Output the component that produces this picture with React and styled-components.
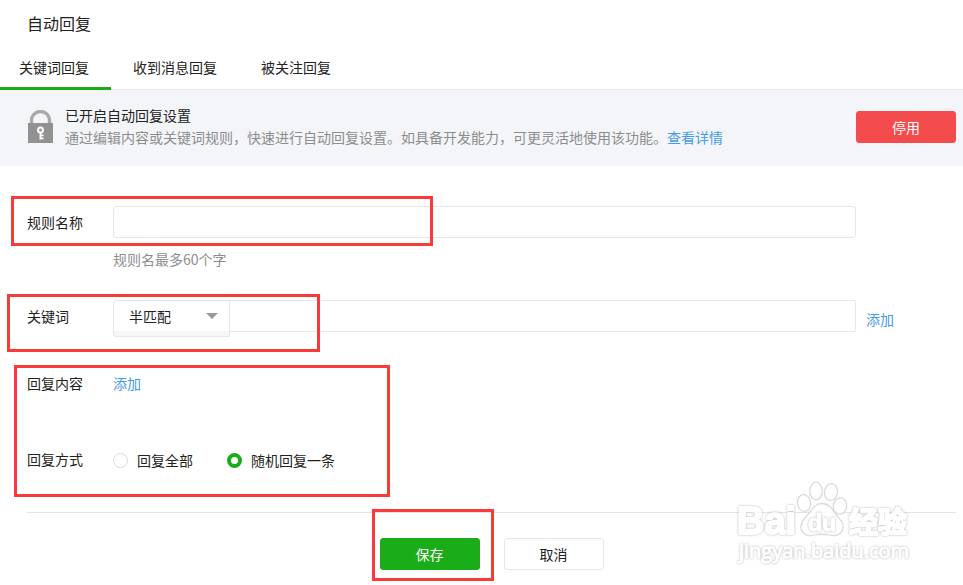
import React, { useState } from 'react';
import styled, { createGlobalStyle, css } from 'styled-components';

const GlobalStyle = createGlobalStyle`
  *, *::before, *::after { box-sizing: border-box; }
  body {
    margin: 0;
    background: #fff;
    color: #222;
    font-family: "Noto Sans CJK SC", "Liberation Sans", sans-serif;
    font-size: 14px;
    line-height: 22px;
  }
  button, input, select { font: inherit; color: inherit; }
`;

const Page = styled.div`
  overflow: hidden;
`;

const Title = styled.h1`
  margin: 0;
  padding: 11px 27px;
  font-size: 16px;
  font-weight: 400;
  line-height: 24px;
`;

const Tabs = styled.nav`
  display: flex;
  border-bottom: 1px solid #e4e8eb;
`;

const Tab = styled.button`
  height: 44px;
  margin: 0 0 -1px;
  padding: 1px 22px 0;
  border: 0;
  border-bottom: 3px solid ${(p) => (p.$active ? '#1aad19' : 'transparent')};
  background: none;
  cursor: pointer;
  &:first-child { padding-left: 19px; }
`;

const Notice = styled.section`
  display: flex;
  align-items: center;
  gap: 12px;
  padding: 14px 7px 16px 28px;
  background: #f4f5f9;
`;

const LockIcon = styled.svg`
  flex: none;
  width: 25px;
  height: 34px;
`;

const NoticeText = styled.div`
  flex: 1;
  padding-bottom: 2px;
`;

const Paragraph = styled.p`
  margin: 0;
  color: ${(p) => (p.$muted ? '#8d8d8d' : '#222')};
`;

const Link = styled.a`
  color: #459ae9;
  text-decoration: none;
`;

const Button = styled.button`
  width: 100px;
  height: 32px;
  padding: 0;
  border: 1px solid #e4e8eb;
  border-radius: 3px;
  background: #fff;
  cursor: pointer;
  ${(p) => p.$tone && css`
    color: #fff;
    background: ${p.$tone};
    border-color: ${p.$tone};
  `}
`;

const Form = styled.form`
  padding: 40px 7px 0 27px;
`;

const Field = styled.div`
  position: relative;
  display: grid;
  grid-template-columns: 86px 1fr 100px;
  align-items: start;
  margin-bottom: ${(p) => p.$after || 0}px;
`;

const Label = styled.label`
  padding-top: ${(p) => (p.$inline ? 0 : 5)}px;
`;

const Control = styled.div`
  display: flex;
  align-items: flex-start;
`;

const TextInput = styled.input`
  flex: 1;
  min-width: 0;
  height: 32px;
  padding: 0 10px;
  border: 1px solid #e4e8eb;
  border-radius: 3px;
  background: #fff;
  outline: 0;
  ${(p) => p.$joined && css`
    border-left: 0;
    border-radius: 0 3px 3px 0;
  `}
`;

const Hint = styled.p`
  grid-column: 2;
  margin: 10px 0 0;
  color: #8d8d8d;
`;

const SelectBox = styled.div`
  position: relative;
  width: 117px;
`;

const Select = styled.select`
  display: block;
  appearance: none;
  width: 100%;
  height: 37px;
  padding: 0 30px 6px 15px;
  border: 1px solid #e4e8eb;
  border-radius: 3px 0 0 3px;
  background: linear-gradient(#fff 30px, #f6f7f9 30px);
  outline: 0;
`;

const Caret = styled.span`
  position: absolute;
  top: 13px;
  right: 12px;
  border: 6px solid transparent;
  border-top-color: #9a9a9a;
  border-bottom: 0;
  pointer-events: none;
`;

const AddLink = styled(Link)`
  padding: 8px 10px 0;
`;

const Options = styled.div`
  display: flex;
  gap: 34px;
  padding-top: 1px;
`;

const Option = styled.label`
  display: flex;
  align-items: center;
  gap: 9px;
`;

const Radio = styled.input`
  appearance: none;
  width: 15px;
  height: 15px;
  margin: 0;
  border: 1px solid #d9dadc;
  border-radius: 50%;
  background: #fff;
  &:checked { border: 4px solid #1aad19; }
`;

const Footer = styled.footer`
  position: relative;
  display: flex;
  justify-content: center;
  gap: 24px;
  padding: 25px 0 15px;
  border-top: 1px solid #e4e4e4;
`;

const ButtonSlot = styled.div`
  position: relative;
  display: flex;
`;

const Highlight = styled.div`
  position: absolute;
  top: ${(p) => p.$top}px;
  left: ${(p) => p.$left}px;
  width: ${(p) => p.$width}px;
  height: ${(p) => p.$height}px;
  border: 3px solid #fa3a3a;
  pointer-events: none;
`;

const ReplyGroup = styled.div`
  position: relative;
`;

const WatermarkArt = styled.svg`
  position: absolute;
  top: -34px;
  right: 40px;
  width: 184px;
  height: 90px;
  opacity: 0.85;
  pointer-events: none;
`;

const Outlined = styled.g`
  fill: #fff;
  stroke: #fff;
  stroke-linejoin: round;
  filter: drop-shadow(0 0 1px #a8a8a8);
`;

function Lock() {
  return (
    <LockIcon viewBox="0 0 25 34" aria-hidden="true">
      <path d="M3.5 14v-3.5a9 9 0 0 1 18 0V14" fill="none" stroke="#a9a9a9" strokeWidth="3.4" />
      <path d="M0 13h25v20H0z" fill="#919191" />
      <circle cx="12.5" cy="20" r="2.5" fill="none" stroke="#fff" strokeWidth="2" />
      <path d="M12.4 22.5v7M12.5 25.3h3M12.5 28.3h3" fill="none" stroke="#fff" strokeWidth="1.7" />
    </LockIcon>
  );
}

function Watermark() {
  return (
    <WatermarkArt viewBox="0 0 184 90" aria-hidden="true">
      <Outlined strokeWidth="2">
        <text x="5" y="55" fontFamily="Liberation Sans, sans-serif" fontSize="38" fontWeight="700">Bai</text>
        <text x="117" y="54" fontFamily="Noto Sans CJK SC, sans-serif" fontSize="29" fontWeight="700">经验</text>
      </Outlined>
      <Outlined strokeWidth="1">
        <text x="7" y="79" fontFamily="Open Sans, sans-serif" fontSize="20">jingyan.baidu.com</text>
      </Outlined>
      <g fill="#fff" stroke="#d4d4d4" strokeWidth="1.3">
        <ellipse cx="72" cy="24" rx="6.5" ry="8.5" transform="rotate(-8 72 24)" />
        <ellipse cx="84" cy="12" rx="6.2" ry="8.8" />
        <ellipse cx="99" cy="13" rx="6.5" ry="8.5" transform="rotate(8 99 13)" />
        <ellipse cx="108" cy="27" rx="6.7" ry="8.2" transform="rotate(8 108 27)" />
        <path d="M90 24.500c-7 0-10 6-14 11-5 5-8 9-7 14 2 8 10 8 16 6h10c6 2 14 2 16-6 1-6-3-9-7-14-4-6-7-11-14-11z" />
      </g>
      <Outlined strokeWidth="1">
        <text x="76" y="52" fontFamily="Liberation Sans, sans-serif" fontSize="23" fontWeight="700">du</text>
      </Outlined>
    </WatermarkArt>
  );
}

const TABS = ['关键词回复', '收到消息回复', '被关注回复'];
const MODES = ['回复全部', '随机回复一条'];

export default function App() {
  const [tab, setTab] = useState(0);
  const [mode, setMode] = useState(1);

  return (
    <Page>
      <GlobalStyle />
      <Title>自动回复</Title>
      <Tabs>
        {TABS.map((name, i) => (
          <Tab key={name} type="button" $active={i === tab} onClick={() => setTab(i)}>{name}</Tab>
        ))}
      </Tabs>
      <Notice>
        <Lock />
        <NoticeText>
          <Paragraph>已开启自动回复设置</Paragraph>
          <Paragraph $muted>
            通过编辑内容或关键词规则，快速进行自动回复设置。如具备开发能力，可更灵活地使用该功能。<Link href="#detail">查看详情</Link>
          </Paragraph>
        </NoticeText>
        <Button type="button" $tone="#f44c4c">停用</Button>
      </Notice>
      <Form onSubmit={(e) => e.preventDefault()}>
        <Field $after={30}>
          <Label htmlFor="rule-name">规则名称</Label>
          <Control><TextInput id="rule-name" type="text" maxLength={60} /></Control>
          <Hint>规则名最多60个字</Hint>
          <Highlight $top={-10} $left={-16} $width={422} $height={50} />
        </Field>
        <Field $after={35}>
          <Label htmlFor="keyword">关键词</Label>
          <Control>
            <SelectBox>
              <Select aria-label="匹配方式" defaultValue="half">
                <option value="half">半匹配</option>
                <option value="full">全匹配</option>
              </Select>
              <Caret />
            </SelectBox>
            <TextInput id="keyword" type="text" $joined />
          </Control>
          <AddLink href="#add-keyword">添加</AddLink>
          <Highlight $top={-6} $left={-20} $width={313} $height={58} />
        </Field>
        <ReplyGroup>
          <Field $after={54}>
            <Label as="span" $inline>回复内容</Label>
            <Control><Link href="#add-reply">添加</Link></Control>
          </Field>
          <Field $after={41} role="radiogroup" aria-labelledby="reply-mode">
            <Label as="span" id="reply-mode" $inline>回复方式</Label>
            <Options>
              {MODES.map((name, i) => (
                <Option key={name}>
                  <Radio type="radio" name="mode" checked={i === mode} onChange={() => setMode(i)} />
                  {name}
                </Option>
              ))}
            </Options>
          </Field>
          <Highlight $top={-7} $left={-13} $width={376} $height={132} />
        </ReplyGroup>
        <Footer>
          <ButtonSlot>
            <Button type="submit" $tone="#1aad19">保存</Button>
            <Highlight $top={-29} $left={-8} $width={122} $height={72} />
          </ButtonSlot>
          <Button type="button">取消</Button>
          <Watermark />
        </Footer>
      </Form>
    </Page>
  );
}
